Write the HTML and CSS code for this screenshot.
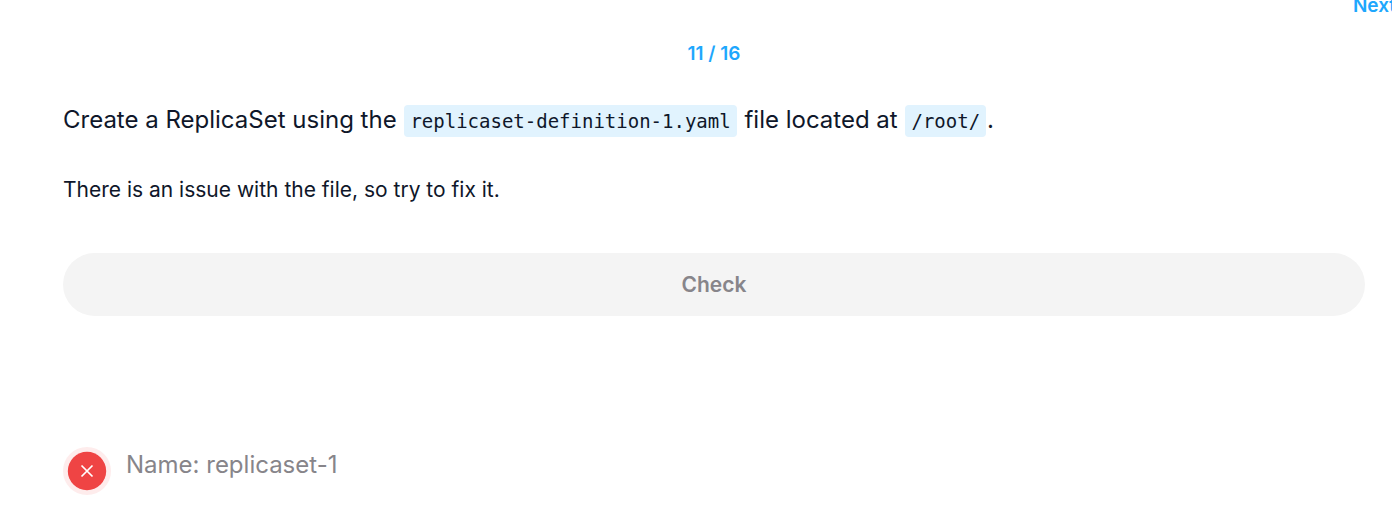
FILE: index.html
```html
<!DOCTYPE html>
<html lang="en">

<head>
    <meta charset="utf-8">
    <meta name="viewport" content="width=device-width, initial-scale=1.0">
    <title>ReplicaSets</title>
    <link rel="stylesheet" href="styles.css">
</head>

<body>

    <nav>
        <a href="#next" class="next">Next</a>
    </nav>

    <main>
        <p class="counter">11 / 16</p>

        <h1>Create a ReplicaSet using the <code>replicaset-definition-1.yaml</code> file located at <code>/root/</code>.</h1>

        <p class="hint">There is an issue with the file, so try to fix it.</p>

        <button type="button" class="check">Check</button>

        <ul class="results">
            <li>
                <svg class="failed" viewBox="0 0 48 48" role="img" aria-label="Failed">
                    <circle cx="24" cy="24" r="24" fill="#feecec" />
                    <circle cx="24" cy="24" r="19.2" fill="#ef4444" />
                    <path d="M18.5 18.5l11 11M29.5 18.5l-11 11" stroke="#fff" stroke-width="1.7" />
                </svg>
                <span>Name: replicaset-1</span>
            </li>
        </ul>
    </main>

</body>

</html>
```
FILE: styles.css
```css
* {
    box-sizing: border-box;
    margin: 0;
    padding: 0;
}

body {
    background-color: #fff;
    color: #0f172a;
    font-family: Inter, sans-serif;
    overflow-x: hidden;
}

nav {
    display: flex;
    justify-content: flex-end;
    height: 18px;
    align-items: flex-end;
    margin-right: -4px;
}

.next,
.counter {
    color: #1ea7fd;
    font-size: 19px;
    font-weight: 600;
    line-height: 24px;
    text-decoration: none;
}

main {
    padding: 24px 27px 0 63px;
}

.counter {
    text-align: center;
}

h1 {
    margin-top: 36px;
    font-size: 24px;
    font-weight: 400;
    line-height: 36px;
}

code {
    margin: 0 1px;
    padding: 5px 6px;
    border-radius: 4px;
    background-color: #e1f3fe;
    font-family: "DejaVu Sans Mono", monospace;
    font-size: 19px;
}

.hint {
    margin-top: 35px;
    font-size: 21px;
    line-height: 32px;
}

.check {
    display: block;
    width: 100%;
    margin-top: 47px;
    padding: 16px;
    border: none;
    border-radius: 32px;
    background-color: #f4f4f4;
    color: #87858a;
    font-family: inherit;
    font-size: 21px;
    font-weight: 600;
    line-height: 31px;
}

.results {
    margin-top: 131px;
    list-style: none;
}

.results li {
    display: flex;
    gap: 15px;
    color: #87858a;
    font-size: 24px;
    line-height: 36px;
}

.failed {
    width: 48px;
    height: 48px;
}
```
